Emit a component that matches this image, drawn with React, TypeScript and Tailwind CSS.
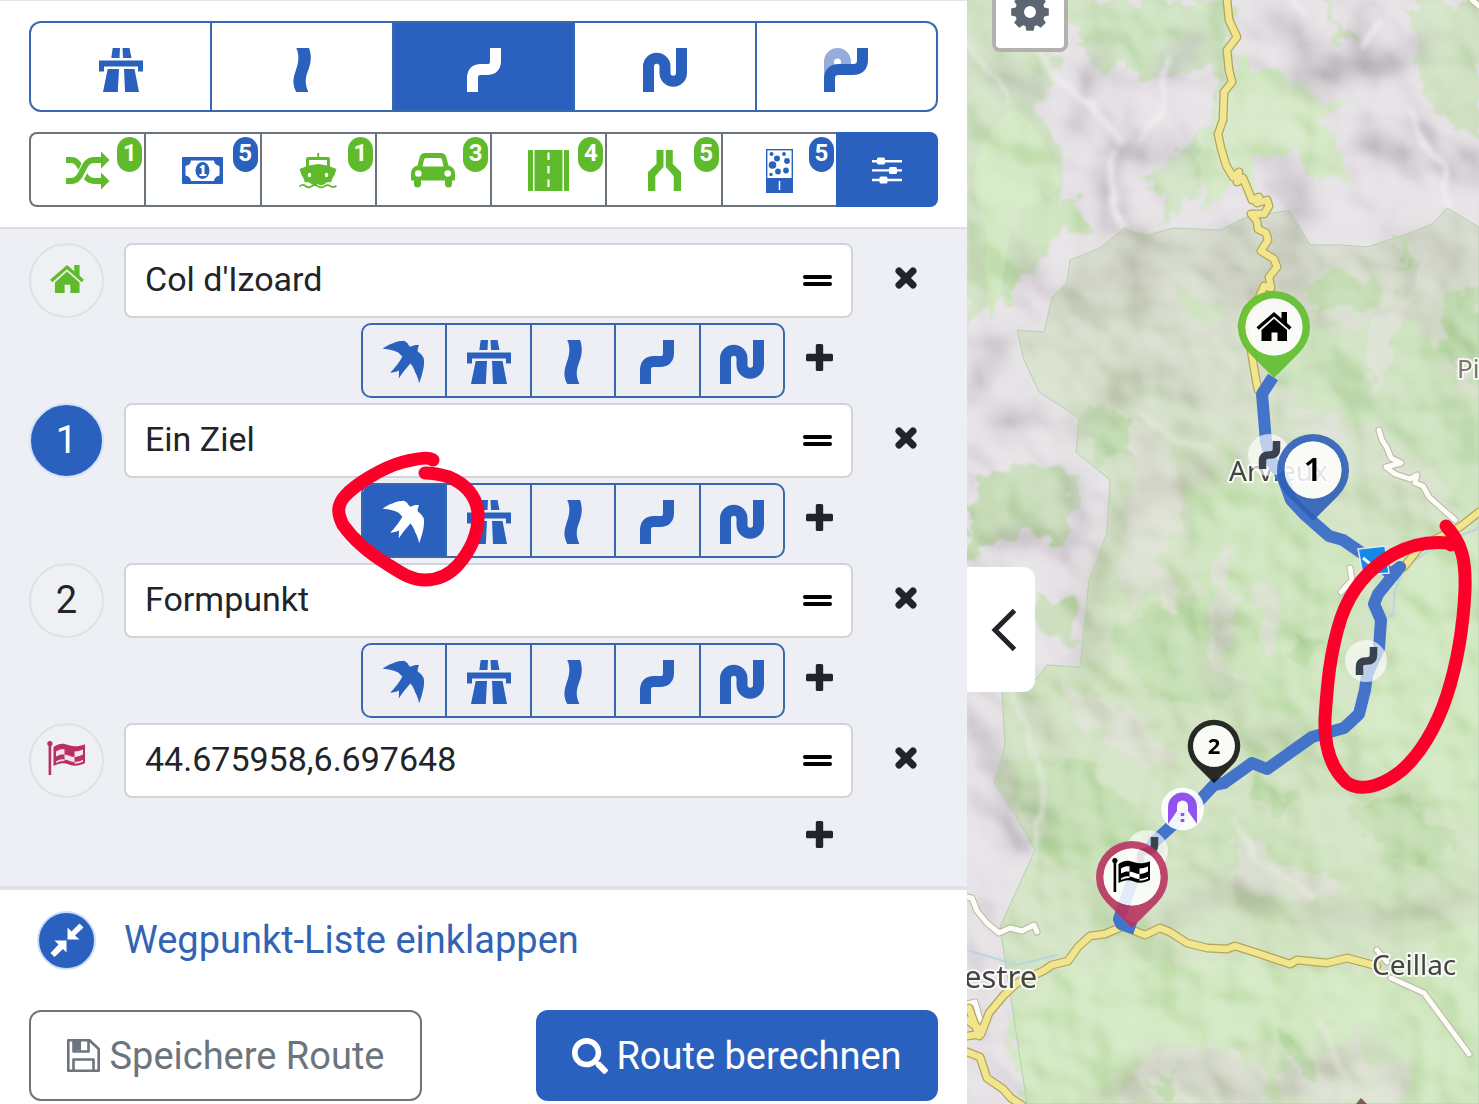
import { useState, type ReactNode } from "react";
import { FaSearch } from "react-icons/fa";

type IconProps = { className?: string };

function MotorwayIcon({ className = "size-11" }: IconProps) {
  return (
    <svg viewBox="0 0 44 44" className={className} fill="currentColor" aria-hidden="true">
      <path d="M13.7 0H21L20.5 10H12.3ZM23.5 0H30.5L32.5 10H24ZM0 12.5H44V23.5H39V18.5H5V23.5H0ZM8.7 21H20L18.8 44H4ZM25 21H35.5L40 44H26Z" />
    </svg>
  );
}

function FastCurvyIcon({ className = "size-11" }: IconProps) {
  return (
    <svg viewBox="0 0 44 44" className={className} fill="currentColor" aria-hidden="true">
      <path d="M16.3 0H29C31.5 7 31.3 13 29 20C26.5 27 23.5 33 28.3 44H16.3C12.5 37 13 31 15 25C17.5 17 20.5 10 16.3 0Z" />
    </svg>
  );
}

function CurvyIcon({ className = "size-11" }: IconProps) {
  return (
    <svg viewBox="0 0 44 44" className={className} fill="none" stroke="currentColor" strokeWidth="11" aria-hidden="true">
      <path d="M10.500 44V30Q10.500 21.500 19 21.500H25Q33.500 21.500 33.500 13V0" />
    </svg>
  );
}

function ExtraCurvyIcon({ className = "size-11" }: IconProps) {
  return (
    <svg viewBox="0 0 44 44" className={className} fill="none" stroke="currentColor" strokeWidth="11" aria-hidden="true">
      <path d="M5.5 44V18.5A8.25 8.25 0 0 1 22 18.5V25A8.25 8.25 0 0 0 38.5 25V0" />
    </svg>
  );
}

function RoundTripIcon({ className = "size-11" }: IconProps) {
  return (
    <svg viewBox="0 0 44 44" className={className} aria-hidden="true">
      <path
        fill="#95acdc"
        fillRule="evenodd"
        d="M0 32V13.5A13.5 13.5 0 0 1 27 13.5V17H10ZM13.5 10.5A3.5 3.5 0 1 0 13.5 17.5A3.5 3.5 0 1 0 13.5 10.5Z"
      />
      <path
        d="M5.5 44V31Q5.500 21.500 15 21.500H29Q38.500 21.500 38.500 12V0"
        fill="none"
        stroke="currentColor"
        strokeWidth="11"
      />
    </svg>
  );
}

function BirdIcon({ className = "size-11" }: IconProps) {
  return (
    <svg viewBox="0 0 44 44" className={className} fill="currentColor" aria-hidden="true">
      <path d="M.6 8.500C4 6 7 4.700 11 3.200C15 1.600 18.500 .8 21.600 .8C24 1.500 26 3.500 26.600 5.200L28.600 6.800C31 5.500 34 4.800 37 5.200C36.600 6.500 35.600 8 35.600 11.200C38.500 13.500 41.200 16 41.800 18.500C43 26 40 35 37.300 43.200C36 38.500 35 35.500 33.300 32.500C32.300 29 30.500 26 28.600 23.500C26 26 21 32 16.800 38.500L17 30.500C14 32 11 32.500 8.300 32.500C12 29 17 23 20.300 16.800C18.500 14 16 12 13.300 11.200C9 9.500 5 9.300 .6 8.500Z" />
    </svg>
  );
}

function ShuffleIcon() {
  return (
    <svg viewBox="0 0 44 39" className="h-[39px] w-11" fill="none" stroke="currentColor" strokeWidth="6" aria-hidden="true">
      <path d="M0 9H5C17 9 15 30 28 30H36" />
      <path d="M8 30C19 28 16 9 28 9H33" stroke="#fff" strokeWidth="9" />
      <path d="M0 30H5C18 30 15 9 28 9H36" />
      <path d="M35 .5L43.500 9L35 17.500ZM35 21.500L43.500 30L35 38.500Z" fill="currentColor" stroke="none" />
    </svg>
  );
}

function MoneyIcon() {
  return (
    <svg viewBox="0 0 41 27" className="h-[27px] w-[41px]" aria-hidden="true">
      <rect width="41" height="27" rx="1" fill="currentColor" />
      <path d="M9 3.500H32Q32.500 8 37.500 9V18.500Q32.500 19.500 32 24H9Q8.500 19.500 3.500 18.500V9Q8.500 8 9 3.500Z" fill="#fff" />
      <ellipse cx="20.500" cy="13.500" rx="7" ry="8.500" fill="currentColor" />
      <path d="M17.500 10.500L20 8H22.500V17H24.500V19H17.500V17H19.700V11.500Z" fill="#fff" />
    </svg>
  );
}

function FerryIcon() {
  return (
    <svg viewBox="0 0 38 36" className="h-9 w-[38px]" fill="currentColor" aria-hidden="true">
      <path d="M18.300 0H20.200V4H29Q31 4 31 6V13.500L37.500 16L35.500 22Q33 25 32 29.500Q29 28 25.500 31Q22 33.500 19 31Q16 33.500 12.500 31Q9 28 6 29.500Q5 25 2.500 22L.5 16L7 13.500V6Q7 4 9 4H18.300ZM10 7V12.500L19 11L28 12.500V7Z" fillRule="evenodd" />
      <ellipse cx="10.500" cy="22" rx="1.700" ry="2.200" fill="#fff" />
      <ellipse cx="27.500" cy="22" rx="1.700" ry="2.200" fill="#fff" />
      <path d="M.5 33.500Q3.500 30.500 6.500 33Q9.500 35.500 12.500 33.200Q15.500 31 19 33.200Q22 35.500 25.500 33.200Q28.500 31 31.500 33.200Q34.500 35.200 37.500 32.800" fill="none" stroke="currentColor" strokeWidth="1.800" />
    </svg>
  );
}

function CarIcon() {
  return (
    <svg viewBox="0 0 44 35" className="h-[35px] w-11" fill="currentColor" aria-hidden="true">
      <path
        fillRule="evenodd"
        d="M14 0H30Q34 0 35.300 4L37.500 12.500Q44 14.500 44 20V27.500H41V31Q41 34.500 37.500 34.500Q34 34.500 34 31V27.500H10V31Q10 34.500 6.500 34.500Q3 34.500 3 31V27.500H0V20Q0 14.500 6.500 12.500L8.700 4Q10 0 14 0ZM15 5Q13.500 5 13 6.500L11.500 13.500H32.500L31 6.500Q30.500 5 29 5Z"
      />
      <circle cx="7.300" cy="20.500" r="3.300" fill="#fff" />
      <circle cx="36.700" cy="20.500" r="3.300" fill="#fff" />
    </svg>
  );
}

function HighwayIcon() {
  return (
    <svg viewBox="0 0 41 41" className="size-[41px]" fill="currentColor" aria-hidden="true">
      <path d="M0 0H5V41H0ZM6.500 0H34.500V41H6.500ZM36 0H41V41H36Z" />
      <path d="M20.500 2.500V41" stroke="#fff" strokeWidth="2.200" strokeDasharray="7.500 6" />
    </svg>
  );
}

function NarrowRoadIcon() {
  return (
    <svg viewBox="0 0 33 41" className="h-[41px] w-[33px]" fill="currentColor" aria-hidden="true">
      <path d="M8.500 0H15.500V17L7.300 26V41H0V22L8.500 14ZM17.800 0H24.800V14L33 22V41H25.700V26L17.800 17Z" />
    </svg>
  );
}

function GravelIcon() {
  return (
    <svg viewBox="0 0 27 44" className="h-11 w-[27px]" fill="currentColor" aria-hidden="true">
      <rect x=".7" y=".7" width="25.600" height="42.600" fill="#fff" stroke="currentColor" strokeWidth="1.400" />
      <rect y="29" width="27" height="15" />
      <path d="M13.500 32V41" stroke="#fff" strokeWidth="1.500" />
      <circle cx="5.500" cy="5" r="2" />
      <circle cx="18" cy="5" r="1.900" />
      <circle cx="11" cy="9.500" r="3" />
      <circle cx="21" cy="12" r="2.900" />
      <circle cx="6.500" cy="16" r="3.800" />
      <circle cx="12" cy="22.500" r="2.900" />
      <circle cx="20" cy="21.500" r="2.900" />
      <circle cx="5" cy="25.500" r="1.700" />
    </svg>
  );
}

function SlidersIcon() {
  return (
    <svg viewBox="0 0 30 28" className="h-7 w-[30px]" fill="currentColor" aria-hidden="true">
      <path d="M0 4H30V6.400H0ZM0 13.200H30V15.600H0ZM0 22.800H30V25.200H0Z" />
      <rect x="5" y="1.500" width="8" height="7" rx="1.500" />
      <rect x="17" y="11" width="8" height="7" rx="1.500" />
      <rect x="7.500" y="20.500" width="8" height="7" rx="1.500" />
    </svg>
  );
}

const HOUSE_PATH =
  "M17.500 0L25 6.500V0H30.500V11L35 15.200L32.800 17.800L17.500 4.500L2.200 17.800L0 15.200ZM17.500 6.700L30.500 18V28.500Q30.500 29 30 29H21V20.500H15V29H5.500Q5 29 5 28.500V18Z";

function HouseIcon({ className }: IconProps) {
  return (
    <svg viewBox="0 0 35 29" className={className} fill="currentColor" aria-hidden="true">
      <path d={HOUSE_PATH} />
    </svg>
  );
}

function FlagShapes({ light }: { light: string }) {
  return (
    <>
      <path d="M1.600 3H4.200V34H1.600Z" fill="currentColor" />
      <circle cx="2.900" cy="2.600" r="2.600" fill="currentColor" />
      <path
        d="M6.500 6C13 1.500 17 2.500 22 4.200C27 6 32 5.500 38 3.200V22C32 25 27 25.500 22 23.500C17 21.500 13 21.500 6.500 25Z"
        fill="currentColor"
      />
      <path
        d="M9 10.500C12 8.500 14.500 8 17.500 8.300V13.500C14.500 13.200 12 13.700 9 15.500ZM17.500 13.500C21 13.800 24 16 27.500 16V21C24 21 21 19 17.500 18.500ZM27.500 10.500C30.500 10.500 33 9.800 36 8.500V13.500C33 15 30.500 15.800 27.500 16ZM9 20.500C12 18.500 14.500 18 17.500 18.500V20C14.500 19.800 12 20.500 9 22ZM27.500 21C30.500 21 33 20.300 36 18.800V20.700C33 22 30.500 22.500 27.500 22.700Z"
        fill={light}
      />
    </>
  );
}

function CrossIcon({ className }: IconProps) {
  return (
    <svg viewBox="0 0 24 24" className={className} aria-hidden="true">
      <path d="M5 5L19 19M19 5L5 19" stroke="currentColor" strokeWidth="7" strokeLinecap="round" />
    </svg>
  );
}

function PlusIcon() {
  return (
    <svg viewBox="0 0 27 27" className="size-[27px]" fill="currentColor" aria-hidden="true">
      <rect x="9.800" width="7.400" height="27" rx="1.500" />
      <rect y="9.800" width="27" height="7.400" rx="1.500" />
    </svg>
  );
}

function CollapseIcon() {
  return (
    <svg viewBox="0 0 34 34" className="size-[34px]" fill="currentColor" aria-hidden="true">
      <path d="M16.500 17.500V29.500L13 26L4.500 34L.5 30L8.500 21.500L4.500 17.500ZM17.500 16.500V4.500L21.500 8.500L29.500 .5L33.500 4.500L25 12.500L29.500 16.500Z" />
    </svg>
  );
}

function FloppyIcon() {
  return (
    <svg viewBox="0 0 33 33" className="size-[33px]" fill="none" stroke="currentColor" strokeWidth="2.600" aria-hidden="true">
      <path d="M1.300 1.300H22.500L31.700 10V31.700H1.300ZM6.500 1.500V12.500H21.500V1.500M6.500 31.500V20.500H26.500V31.500" strokeLinejoin="round" />
      <path d="M7 1.500H14V11.500H7Z" fill="currentColor" stroke="none" />
    </svg>
  );
}

function GearIcon() {
  return (
    <svg viewBox="-20 -20 40 40" className="size-10" fill="#5b6672" aria-hidden="true">
      {[0, 45, 90, 135, 180, 225, 270, 315].map((angle) => (
        <path key={angle} d="M-5 -12L-3.600 -18.800H3.600L5 -12Z" transform={`rotate(${angle})`} />
      ))}
      <circle r="10.500" fill="none" stroke="#5b6672" strokeWidth="9" />
    </svg>
  );
}

const routeModes = [
  { label: "Schnell", icon: <MotorwayIcon /> },
  { label: "Schnell und kurvig", icon: <FastCurvyIcon /> },
  { label: "Kurvig", icon: <CurvyIcon /> },
  { label: "Extra kurvig", icon: <ExtraCurvyIcon /> },
  { label: "Rundtour", icon: <RoundTripIcon /> },
];

const legModes = [
  { label: "Luftlinie", icon: <BirdIcon /> },
  { label: "Schnell", icon: <MotorwayIcon /> },
  { label: "Schnell und kurvig", icon: <FastCurvyIcon /> },
  { label: "Kurvig", icon: <CurvyIcon /> },
  { label: "Extra kurvig", icon: <ExtraCurvyIcon /> },
];

const options: { label: string; count: number; green: boolean; icon: ReactNode }[] = [
  { label: "Alternativen", count: 1, green: true, icon: <ShuffleIcon /> },
  { label: "Maut", count: 5, green: false, icon: <MoneyIcon /> },
  { label: "Fähren", count: 1, green: true, icon: <FerryIcon /> },
  { label: "Verkehr", count: 3, green: true, icon: <CarIcon /> },
  { label: "Autobahnen", count: 4, green: true, icon: <HighwayIcon /> },
  { label: "Schmale Straßen", count: 5, green: true, icon: <NarrowRoadIcon /> },
  { label: "Unbefestigte Straßen", count: 5, green: false, icon: <GravelIcon /> },
];

function RouteModes() {
  const [active, setActive] = useState(2);
  return (
    <div role="group" aria-label="Routenart" className="flex h-[91px] divide-x-2 divide-[#3a68b0] overflow-hidden rounded-xl border-2 border-[#3a68b0] text-[#2b61be]">
      {routeModes.map((mode, i) => (
        <button
          key={mode.label}
          type="button"
          aria-label={mode.label}
          aria-pressed={i === active}
          onClick={() => setActive(i)}
          className={`flex flex-1 items-center justify-center pt-1.5 ${i === active ? "bg-[#2b61be] text-white" : ""}`}
        >
          {mode.icon}
        </button>
      ))}
    </div>
  );
}

function RouteOptions() {
  return (
    <div className="flex h-[75px]">
      <div className="flex min-w-0 flex-1 divide-x-2 divide-[#6c757d] rounded-l-lg border-2 border-r-0 border-[#6c757d]">
        {options.map((option) => (
          <button
            key={option.label}
            type="button"
            aria-label={option.label}
            className={`relative flex flex-1 items-center justify-center pt-0.5 ${option.green ? "text-[#5fbb2c]" : "text-[#2b61be]"}`}
          >
            {option.icon}
            <span
              className={`absolute top-[3px] right-0.5 flex h-[35px] w-[25px] justify-center rounded-full text-2xl font-bold text-white ${
                option.green ? "bg-[#5fbb2c]" : "bg-[#2b61be]"
              }`}
            >
              {option.count}
            </span>
          </button>
        ))}
      </div>
      <button type="button" aria-label="Weitere Optionen" className="flex w-[102px] items-center justify-center rounded-r-lg bg-[#2b61be] text-white">
        <SlidersIcon />
      </button>
    </div>
  );
}

type Waypoint = { name: string; badge: ReactNode; filled?: boolean };

const waypoints: Waypoint[] = [
  { name: "Col d'Izoard", badge: <HouseIcon className="mb-0.5 h-7 w-[34px] text-[#5fbb2c]" /> },
  { name: "Ein Ziel", badge: "1", filled: true },
  { name: "Formpunkt", badge: "2" },
  {
    name: "44.675958,6.697648",
    badge: (
      <svg viewBox="0 0 39 34" className="mb-1 h-[34px] w-[39px] text-[#b92f62]" aria-hidden="true">
        <FlagShapes light="#f1e3ea" />
      </svg>
    ),
  },
];

function WaypointRow({ waypoint, index }: { waypoint: Waypoint; index: number }) {
  const id = `waypoint-${index}`;
  return (
    <div className="flex h-[75px] items-center gap-5">
      <label
        htmlFor={id}
        aria-label={`Wegpunkt ${index + 1}`}
        className={`flex size-[75px] shrink-0 items-center justify-center rounded-full border-2 pb-0.5 text-[38px] leading-none ${
          waypoint.filled ? "border-[#d3e2fa] bg-[#2b61be] text-white" : "border-[#dfe1e6] bg-[#eff0f4] text-[#212529]"
        }`}
      >
        {waypoint.badge}
      </label>
      <div className="flex h-full min-w-0 flex-1 items-center rounded-lg border-2 border-[#d0d4d9] bg-white pr-[19px] pl-[19px]">
        <input id={id} defaultValue={waypoint.name} className="h-full min-w-0 flex-1 pb-1 text-[34px] text-[#212529] outline-none" />
        <button type="button" aria-label="Verschieben" className="flex w-[29px] flex-col gap-[3px]">
          <span className="h-1 rounded-full bg-black" />
          <span className="h-1 rounded-full bg-black" />
        </button>
      </div>
      <button type="button" aria-label="Wegpunkt entfernen" className="flex h-full w-[65px] shrink-0 items-center justify-center pb-1.5 text-[#212529]">
        <CrossIcon className="size-6" />
      </button>
    </div>
  );
}

function LegRow({ initial, highlighted }: { initial: number; highlighted?: boolean }) {
  const [active, setActive] = useState(initial);
  return (
    <div className="flex h-[75px] justify-end pr-[85px]">
      <div className="relative">
        <div role="group" aria-label="Teilstrecke" className="flex h-full w-[424px] divide-x-2 divide-[#3a68b0] overflow-hidden rounded-[10px] border-2 border-[#3a68b0] text-[#2b61be]">
          {legModes.map((mode, i) => (
            <button
              key={mode.label}
              type="button"
              aria-label={mode.label}
              aria-pressed={i === active}
              onClick={() => setActive(i)}
              className={`flex flex-1 items-center justify-center pt-0.5 ${i === active ? "bg-[#2b61be] text-white" : ""}`}
            >
              {mode.icon}
            </button>
          ))}
        </div>
        {highlighted && (
          <svg viewBox="0 0 150 130" className="pointer-events-none absolute -top-[30px] -left-[30px] z-10 h-[130px] w-[150px] overflow-visible" aria-hidden="true">
            <path
              d="M102 7C98 4 88 5 72 9C50 15 24 32 14 43C6 52 6 60 12 72C22 86 38 100 56 111C70 120 80 127 94 127C108 127 118 122 127 112C140 97 148 80 147 60C145 40 132 30 118 24C108 21 102 20 94 20"
              fill="none"
              stroke="#fd0029"
              strokeWidth="13"
              strokeLinecap="round"
              strokeLinejoin="round"
            />
          </svg>
        )}
      </div>
      <button type="button" aria-label="Wegpunkt hinzufügen" className="flex w-[68px] items-center justify-center pb-1.5 text-[#212529]">
        <PlusIcon />
      </button>
    </div>
  );
}

function Pin({ x, y, color, children, scale = 1 }: { x: number; y: number; color: string; children: ReactNode; scale?: number }) {
  return (
    <g transform={`translate(${x} ${y})`}>
      <g transform={`scale(${scale})`}>
        <path
          fillRule="evenodd"
          d="M0 51L-25 25.900A36 36 0 1 1 25 25.900ZM0 -28.500A28.500 28.500 0 1 0 0 28.500A28.500 28.500 0 1 0 0 -28.500Z"
          fill={color}
          opacity=".9"
        />
        <circle r="28.500" fill="#fff" opacity=".86" />
      </g>
      {children}
    </g>
  );
}

function LegMarker({ x, y }: { x: number; y: number }) {
  return (
    <g transform={`translate(${x} ${y})`}>
      <circle r="21" fill="#fff" opacity=".65" />
      <path d="M-6.500 14V6Q-6.500 0 0 0H1Q7.500 0 7.500 -6V-14" fill="none" stroke="#39424e" strokeWidth="7.500" />
    </g>
  );
}

const NORTH_ROAD =
  "M260 0L262 20L270 37L260 50L262 70L265 82L257 92L256 120L251 134L254 148L259 165L266 177L272 172L270 182L276 178L281 190L285 200L292 197L290 203L300 200L302 206L297 214L284 214L290 221L291 229L299 233L301 240L294 251L307 259L310 267L302 277L304 288L297 286L292 298L280 310L275 326L284 350L288 374L291 390";
const SOUTH_ROADS =
  "M152 928L138 934L123 936L111 947L101 961L85 965L76 971L50 983L37 995L22 1013L14 1034L0 1036M0 1052L13 1057L20 1078L36 1089L44 1098L56 1106M168 931L178 935L193 928L203 932L220 943L240 948L260 949L268 946L290 953L323 964L330 960L360 963L380 958L410 966M437 567L452 548L467 540L493 527L512 512M0 1020L14 1030M2 1008L12 1036";
const WHITE_ROADS =
  "M0 897L5 898L10 911L20 923L32 933L43 928L55 931L67 925L70 932M412 430L415 440L420 448L424 458L434 463L419 467L428 474L443 479L450 475L448 483L456 486L462 497L472 506L488 520M424 978L457 993L502 1054M410 950L420 962M0 1004L8 1002L13 1020M383 568L385 580L374 592M505 0L512 6";
const ROUTE =
  "M306 377L295 394L299 442L305 462L316 478L324 500L337 514L362 536L376 540L405 560L424 574L433 567L411 594L407 604L414 620L412 648L400 675L398 690L392 714L377 728L345 737L300 769L285 763L257 783L247 785L233 800L187 842L165 882L152 919L154 924L168 929";
const PARK =
  "M50 330L77 332L85 297L100 283L103 260L133 248L157 228L180 235L207 228L253 230L277 218L323 210L343 245L374 245L400 247L443 233L465 224L480 208L512 227V1104H60L33 927L68 850L47 813L27 783L38 745L35 692L68 680L80 665L113 667L122 580L140 533L143 480L109 452L112 418L72 392L57 360Z";

function Terrain() {
  return (
    <>
      <defs>
        <filter id="rough" x="-10%" y="-10%" width="120%" height="120%">
          <feTurbulence type="fractalNoise" baseFrequency=".04" numOctaves="4" seed="4" />
          <feDisplacementMap in="SourceGraphic" scale="38" xChannelSelector="R" yChannelSelector="G" />
          <feGaussianBlur stdDeviation="1" />
        </filter>
        <filter id="shade" x="-20%" y="-20%" width="140%" height="140%">
          <feTurbulence type="fractalNoise" baseFrequency=".02" numOctaves="2" seed="9" />
          <feDisplacementMap in="SourceGraphic" scale="34" xChannelSelector="R" yChannelSelector="G" />
          <feGaussianBlur stdDeviation="9" />
        </filter>
        <filter id="ridge" x="-20%" y="-20%" width="140%" height="140%">
          <feTurbulence type="fractalNoise" baseFrequency=".03" numOctaves="2" seed="2" />
          <feDisplacementMap in="SourceGraphic" scale="18" xChannelSelector="R" yChannelSelector="G" />
          <feGaussianBlur stdDeviation="2.500" />
        </filter>
        <filter id="relief" x="0" y="0" width="100%" height="100%" colorInterpolationFilters="sRGB">
          <feTurbulence type="fractalNoise" baseFrequency=".013" numOctaves="3" seed="21" />
          <feDiffuseLighting surfaceScale="34" lightingColor="#fff">
            <feDistantLight azimuth="315" elevation="45" />
          </feDiffuseLighting>
          <feGaussianBlur stdDeviation="2" />
        </filter>
        <linearGradient id="park" x1="0" y1="200" x2="0" y2="560" gradientUnits="userSpaceOnUse">
          <stop offset="0" stopColor="#d3d7ca" />
          <stop offset=".4" stopColor="#d5dcca" />
          <stop offset="1" stopColor="#cfe1bf" />
        </linearGradient>
      </defs>
      <rect width="512" height="1104" fill="#e4e0e4" />
      <path d={PARK} fill="url(#park)" />
      <g filter="url(#rough)" fill="#c8e0b8">
        <path d="M-10 0H85L90 50L75 110L95 160L70 250L0 330Z" opacity=".8" />
        <path d="M95 0H260V70L225 200L215 225L190 220L200 190L175 180L240 130L250 60L180 80L150 70L130 70L110 50Z" opacity=".85" />
        <path d="M265 50L340 90L390 110L355 120L370 150L395 180L350 185L330 150L290 160L300 190L255 190L240 215L230 140L265 90Z" fill="#d3e7c4" />
        <path d="M355 0L375 45L395 40L372 25L365 0ZM435 0H512V140L480 120L450 90L455 60L445 30Z" opacity=".8" />
        <path d="M75 200L110 200L125 240L105 225L75 260L55 270L40 310L30 260Z" />
        <path d="M370 265L425 290L400 315L340 300ZM430 240L445 240L430 280ZM480 300L512 290V380L470 350Z" fill="#bfd9ae" />
        <path d="M195 285L240 290L260 325L215 315ZM335 330L450 320L500 390L512 410V520L420 430L340 410L300 350Z" opacity=".85" />
        <path d="M140 395L160 430L165 460L140 460L115 435Z" fill="#bfd9ae" />
        <path d="M220 500L260 450L330 490L400 570L395 630L370 740L290 765L240 700L225 620L240 560Z" fill="#cbe3ba" />
        <path d="M25 470L60 460L110 475L100 545L60 530L0 560V510ZM65 590L115 600L105 650L60 620Z" fill="#c5dab6" />
        <path d="M150 620L230 600L240 650L270 680L260 720L180 690L145 660ZM40 760L120 760L200 830L180 890L60 850Z" fill="#c3ddb1" />
        <path d="M170 960L420 970L512 920V1104H400L370 1030L260 1050L190 1040L110 1104H60L40 1020L90 970Z" fill="#cfe6be" />
        <path d="M430 550L512 530V830L420 780L380 740L420 660Z" fill="#cfe6be" />
        <path d="M255 805L330 840L400 870L490 840L510 870L420 890L300 870L220 860Z" opacity=".7" />
      </g>
      <g filter="url(#rough)" fill="#dcdfd3" opacity=".85">
        <path d="M155 410L185 430L215 470L215 520L195 560L215 600L205 615L180 590L160 610L150 560L165 500Z" />
        <path d="M245 560L260 540L255 580L280 590L255 640L270 680L245 670L240 620ZM295 580L315 600L310 650L300 660L290 620Z" />
        <path d="M140 740L160 700L185 730L210 760L180 770ZM90 680L130 690L150 720L110 740L105 690Z" />
        <path d="M265 830L300 850L345 870L370 895L330 900L260 880L240 890L275 870Z" />
        <path d="M175 1050L250 1045L300 1070L300 1104H150ZM320 1040L370 1060L390 1020L400 1060L450 1060L430 1104H310Z" />
        <path d="M330 400L375 410L370 440L340 430ZM400 400L430 340L450 300L470 240L440 290L400 330Z" />
      </g>
      <g filter="url(#rough)" fill="#bcdaa9" opacity=".8">
        <path d="M310 1020L345 1050L350 1080L320 1060ZM180 1070L210 1080L200 1104ZM385 810L420 790L460 810L490 850L420 860Z" />
        <path d="M150 640L210 620L220 650L170 670ZM320 640L350 640L340 670ZM290 770L330 800L320 820L290 800Z" />
      </g>
      <path d="M8 170Q20 125 45 110Q70 120 86 160L95 185Q70 205 50 210L42 240L34 290L24 320L18 270L20 230Q5 200 8 170Z" fill="#cfe6bf" />
      <g filter="url(#shade)" fill="none" stroke="#a9a1a8" strokeLinecap="round" opacity=".55">
        <path d="M30 70L80 90M155 150L205 155M190 75L225 40M145 160L140 230M130 60L110 130" strokeWidth="16" />
        <path d="M310 20L345 65L400 75L450 45M330 60L360 90M320 180L345 215M400 140L440 160M395 20L390 60" strokeWidth="20" />
        <path d="M450 115L490 180M500 150L512 180M55 250L80 270" strokeWidth="12" />
        <path d="M0 390L40 345M30 430L80 410M55 530L30 540M100 560L115 480" strokeWidth="14" />
        <path d="M0 720L20 740L50 850M70 790L80 840" strokeWidth="14" />
      </g>
      <g filter="url(#shade)" fill="none" stroke="#acac9e" strokeLinecap="round" opacity=".36">
        <path d="M180 240L175 300M110 290L160 265M250 240L270 290M310 240L330 290M450 240L480 260" strokeWidth="26" />
        <path d="M140 390L190 370L230 390M145 400L110 430M175 440L180 490L150 510M200 490L260 470M150 520L130 600L120 660" strokeWidth="18" />
        <path d="M260 620L245 670L280 710M280 740L330 735M90 740L60 700M195 920L240 895L300 900M340 910L400 920L500 900" strokeWidth="18" />
        <path d="M130 1104L180 1060L250 1080L290 1100M320 1090L400 1040L440 1090" strokeWidth="14" />
      </g>
      <g filter="url(#ridge)" fill="none" stroke="#f3f0f3" strokeLinecap="round" strokeLinejoin="round" opacity=".75">
        <path d="M75 50L90 80L125 100L152 140M200 60L195 110L175 145M148 150L142 180L155 225M325 0L340 20M410 20L400 50M440 110L455 140L475 165L482 205" strokeWidth="6" />
        <path d="M265 820L300 870L350 895M350 1020L380 1080M165 410L190 430L250 450" strokeWidth="5" stroke="#e7e9dc" />
        <path d="M0 40L25 75L45 105M45 680L75 780L66 860" strokeWidth="3" />
      </g>
      <rect width="512" height="1104" filter="url(#relief)" className="mix-blend-soft-light" opacity=".38" />
      <path d={PARK} fill="none" stroke="#b5d0b1" strokeWidth="1" />
      <path d="M0 950L20 956L50 965L90 955M437 567L428 590L426 615L420 618M440 566L470 545L512 528" fill="none" stroke="#b9d5df" strokeWidth="2" />
    </>
  );
}

function RouteMap() {
  return (
    <svg viewBox="0 0 512 1104" preserveAspectRatio="xMinYMin slice" className="absolute inset-0 size-full" role="img" aria-label="Karte mit Route">
      <Terrain />
      <g fill="none" strokeLinejoin="round" strokeLinecap="round">
        <path d={WHITE_ROADS} stroke="#b9b6a8" strokeWidth="7" />
        <path d={WHITE_ROADS} stroke="#fdfdf6" strokeWidth="5" />
        <path d={NORTH_ROAD} stroke="#b3a55c" strokeWidth="9" />
        <path d={SOUTH_ROADS} stroke="#b3a55c" strokeWidth="9" />
        <path d={NORTH_ROAD} stroke="#f1e58e" strokeWidth="6.500" />
        <path d={SOUTH_ROADS} stroke="#f1e58e" strokeWidth="6.500" />
      </g>
      <g fontFamily="'Noto Sans', sans-serif" fill="#444" stroke="#fff" strokeOpacity=".8" strokeWidth="4" strokeLinejoin="round" paintOrder="stroke">
        <text x="262" y="481" fontSize="28">Arvieux</text>
        <text x="405" y="975" fontSize="28">Ceillac</text>
        <text x="-3" y="988" fontSize="31">estre</text>
        <text x="490" y="378" fontSize="26" fill="#80746a">Pi</text>
      </g>
      <path d={ROUTE} fill="none" stroke="#4473ca" strokeWidth="12" strokeLinejoin="round" />
      <path d="M391 549L418 546L422 573L396 575Z" fill="#1689e6" stroke="#d8ecfb" strokeWidth="1.500" />
      <path d="M396 558L407 567L417 556" fill="none" stroke="#eaf5ff" strokeWidth="3" />
      <LegMarker x={302} y={455} />
      <LegMarker x={399} y={661} />
      <LegMarker x={180} y={851} />
      <circle cx="215.500" cy="809" r="21.500" fill="#fff" opacity=".93" />
      <path d="M201 824V807A14.500 14.500 0 0 1 230 807V824L221 811V806A5.500 5.500 0 0 0 210 806V811Z" fill="#9152ee" />
      <path d="M215.500 813V816M215.500 819V822" stroke="#9152ee" strokeWidth="3.500" />
      <Pin x={307} y={327} color="#5fbf2e">
        <path d={HOUSE_PATH} transform="translate(-17.500 -15)" />
      </Pin>
      <Pin x={346} y={470} color="#2f5fb8">
        <text y="11" textAnchor="middle" fontFamily="'Noto Sans', sans-serif" fontSize="33" fontWeight="600">
          1
        </text>
      </Pin>
      <Pin x={247} y={746} color="#151515" scale={0.73}>
        <text y="8" textAnchor="middle" fontFamily="'Noto Sans', sans-serif" fontSize="22" fontWeight="700">
          2
        </text>
      </Pin>
      <Pin x={165} y={877} color="#b93461">
        <g transform="translate(-20 -19)" color="#000">
          <FlagShapes light="#fff" />
        </g>
      </Pin>
      <path d="M389 1104L394 1098L400 1104Z" fill="#7c5f50" />
      <path
        d="M479 526C495 543 499 560 498 590C496 632 490 664 480 695C470 726 452 758 430 774C412 787 392 792 379 782C364 768 357 745 358 718C360 690 362 655 374 618C384 589 402 568 427 554C445 544 462 541 481 543L484 545"
        fill="none"
        stroke="#fd0029"
        strokeWidth="13"
        strokeLinecap="round"
        strokeLinejoin="round"
      />
    </svg>
  );
}

export default function App() {
  return (
    <div className="grid min-h-screen grid-cols-[967fr_512fr] bg-white font-[Roboto,sans-serif]">
      <aside className="flex min-w-0 flex-col">
        <header className="flex flex-col gap-5 border-t border-b-2 border-t-[#e3e4e6] border-b-[#dde0e6] px-[29px] py-5">
          <RouteModes />
          <RouteOptions />
        </header>

        <section aria-label="Wegpunkte" className="flex flex-col gap-[5px] border-b-4 border-[#dfe2e9] bg-[#edeff4] px-[29px] pt-3.5 pb-3.5">
          {waypoints.map((waypoint, i) => (
            <div key={waypoint.name} className="flex flex-col gap-[5px]">
              <WaypointRow waypoint={waypoint} index={i} />
              {i < waypoints.length - 1 && <LegRow initial={i === 1 ? 0 : -1} highlighted={i === 1} />}
            </div>
          ))}
          <div className="flex h-[69px] justify-end pr-[85px]">
            <button type="button" aria-label="Ziel hinzufügen" className="flex w-[68px] items-center justify-center pb-1.5 text-[#212529]">
              <PlusIcon />
            </button>
          </div>
        </section>

        <footer className="flex flex-col gap-10 px-[29px] pt-5 pb-[3px]">
          <button type="button" className="flex h-[60px] items-center gap-5 text-left text-[38px] leading-none text-[#3263b4]">
            <span className="flex w-[75px] justify-center">
              <span className="flex size-[59px] items-center justify-center rounded-full border-2 border-[#cfdffa] bg-[#2b61be] text-white">
                <CollapseIcon />
              </span>
            </span>
            Wegpunkt-Liste einklappen
          </button>
          <div className="flex justify-between text-[38px] leading-none">
            <button type="button" className="flex h-[91px] w-[393px] items-center justify-center gap-2.5 rounded-xl border-2 border-[#6c757d] text-[#6c757d]">
              <FloppyIcon />
              Speichere Route
            </button>
            <button type="button" className="flex h-[91px] w-[402px] items-center justify-center gap-2 rounded-xl bg-[#2b61be] text-white">
              <FaSearch className="size-9" />
              Route berechnen
            </button>
          </div>
        </footer>
      </aside>

      <main className="relative overflow-hidden">
        <RouteMap />
        <button type="button" aria-label="Einstellungen" className="absolute -top-7 left-[25px] flex h-20 w-[76px] items-center justify-center rounded-lg border-4 border-[#b3b1ad] bg-white">
          <GearIcon />
        </button>
        <button type="button" aria-label="Seitenleiste ausblenden" className="absolute top-[567px] left-0 flex h-[125px] w-[68px] items-center justify-center rounded-r-xl bg-white pl-1.5 text-[#212529]">
          <svg viewBox="0 0 26 44" className="h-11 w-[26px]" fill="none" stroke="currentColor" strokeWidth="5" aria-hidden="true">
            <path d="M23.500 2.500L4 22L23.500 41.500" />
          </svg>
        </button>
      </main>
    </div>
  );
}
